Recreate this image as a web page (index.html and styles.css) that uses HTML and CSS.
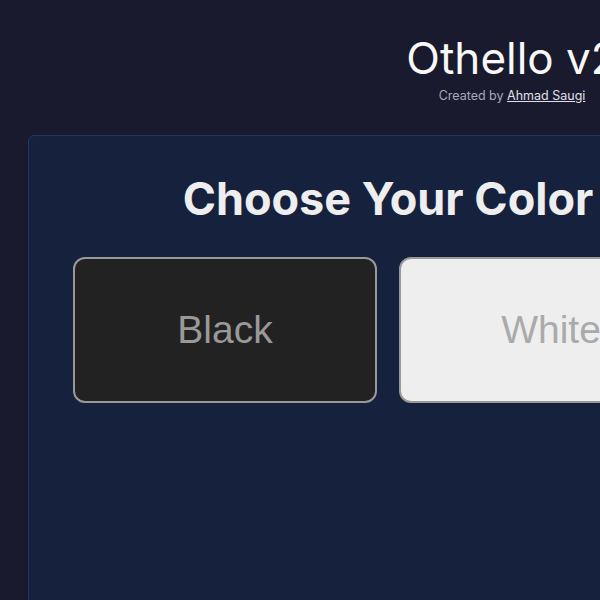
FILE: index.html
```html
<!DOCTYPE html>
<html lang="en">
<head>
    <meta charset="UTF-8">
    <meta name="viewport" content="width=device-width, initial-scale=1.0">
    <title>Othello v2</title>
    <link rel="stylesheet" href="styles.css">
</head>
<body>

    <div class="page">
        <header class="header">
            <h1 class="title">Othello v2</h1>
            <p class="credit">Created by <a href="#">Ahmad Saugi</a></p>
        </header>

        <main class="main">
            <section class="panel">
                <h2 class="panel-title">Choose Your Color</h2>
                <div class="color-options">
                    <button class="color-btn black" onclick="pickColor('black')">Black</button>
                    <button class="color-btn white" onclick="pickColor('white')">White</button>
                </div>
            </section>
        </main>
    </div>

    <script>
        function pickColor(color) {
            document.querySelectorAll(".color-btn").forEach(function (btn) {
                btn.classList.toggle("selected", btn.classList.contains(color));
            });
        }
    </script>

</body>
</html>
```

FILE: styles.css
```css
body {
    font-family: Inter, "Noto Sans", sans-serif;
    background-color: #1a1a2e;
    color: #f0f0f0;
    margin: 0;
}
.page {
    width: 1024px;
}
.header {
    text-align: center;
    padding-top: 32px;
}
.title {
    font-size: 44px;
    font-weight: 400;
    line-height: 1.21;
    margin: 0;
    color: #f8f8f8;
}
.credit {
    font-size: 12.5px;
    margin: 3px 0 0;
    color: #a8a8b8;
}
.credit a {
    color: #e0e0e8;
}
.main {
    padding: 32px 28px 0;
}
.panel {
    width: 720px;
    min-height: 520px;
    box-sizing: border-box;
    background: #16213e;
    border: 1px solid #173a68;
    border-radius: 6px;
    padding-top: 36px;
    text-align: center;
}
.panel-title {
    font-size: 45px;
    font-weight: 700;
    line-height: 1.21;
    margin: 0 0 30px;
    color: #eeeeee;
}
.color-options {
    display: flex;
    justify-content: center;
    gap: 22px;
}
.color-btn {
    width: 304px;
    height: 146px;
    box-sizing: border-box;
    font-family: "Liberation Sans", Arial, sans-serif;
    font-size: 39px;
    border: 2px solid #999;
    border-radius: 12px;
    cursor: pointer;
}
.color-btn.black {
    background-color: #222;
    color: #999;
}
.color-btn.white {
    background-color: #eee;
    color: #aaa;
}
.color-btn.selected {
    border-color: #e94560;
}
```
